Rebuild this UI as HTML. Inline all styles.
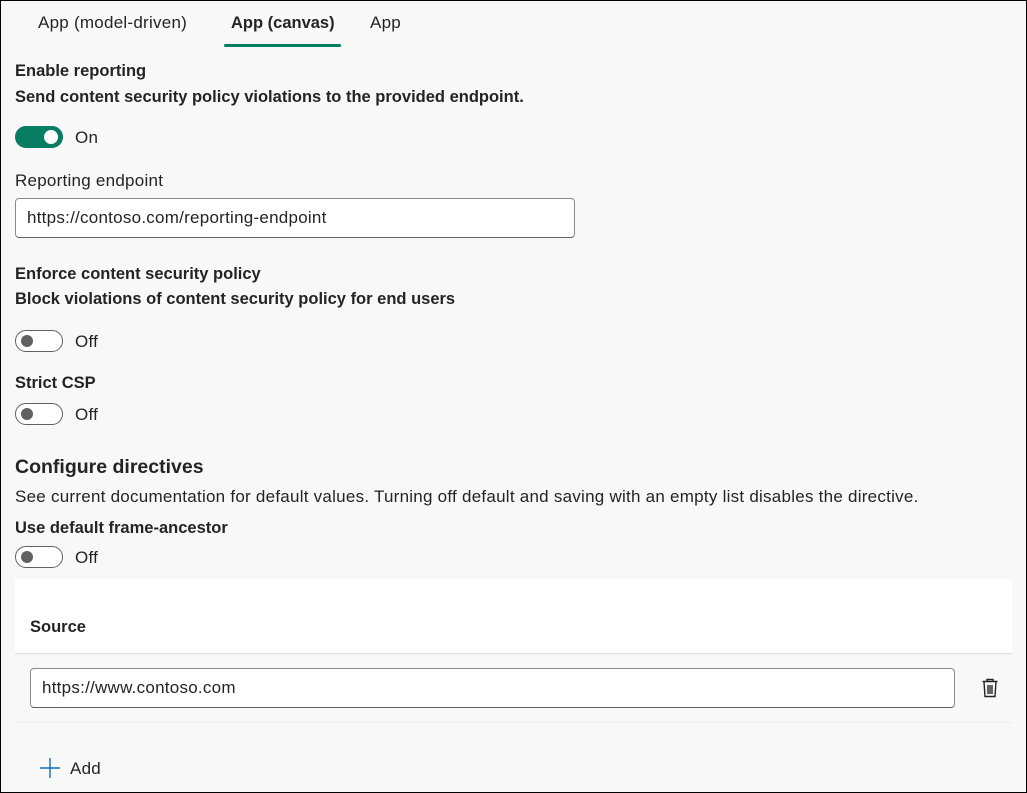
<!DOCTYPE html>
<html><head><style>
body{margin:0;width:1027px;height:793px;overflow:hidden;font-family:"Liberation Sans",sans-serif;color:#242424;}
#f{position:absolute;left:0;top:0;width:1025px;height:791px;border:1px solid #000;background:#f8f8f8;}
.a{position:absolute;white-space:nowrap;font-size:17px;letter-spacing:0.25px;left:14px;}
.b{font-weight:bold;font-size:16.5px;letter-spacing:0;}
.tg{position:absolute;width:48px;height:22px;border-radius:12px;box-sizing:border-box;border:1px solid #616161;background:#fff;}
.tg::after{content:"";position:absolute;top:4px;left:5px;width:12px;height:12px;border-radius:50%;background:#616161;}
.tg.on{background:#077d63;border-color:#077d63;}
.tg.on::after{left:auto;right:4px;background:#fff;width:14px;height:14px;top:3px;}
.in{position:absolute;background:#fff;border:1px solid #8a8a8a;border-bottom-color:#616161;border-radius:4px;box-sizing:border-box;font-size:17px;letter-spacing:0.25px;padding-left:11px;}
</style></head><body><div id="f">
<div class="a" style="left:37px;top:12px">App (model-driven)</div>
<div class="a b" style="left:230px;top:13px">App (canvas)</div>
<div style="position:absolute;left:223px;top:43px;width:117px;height:3px;background:#077d63;border-radius:2px"></div>
<div class="a" style="left:369px;top:12px">App</div>
<div class="a b" style="top:61px">Enable reporting</div>
<div class="a b" style="top:87px">Send content security policy violations to the provided endpoint.</div>
<div class="tg on" style="left:14px;top:125px"></div><div class="a" style="left:74px;top:127px">On</div>
<div class="a" style="top:170px">Reporting endpoint</div>
<div class="in" style="left:14px;top:197px;width:560px;height:40px;line-height:38px">https://contoso.com/reporting-endpoint</div>
<div class="a b" style="top:264px">Enforce content security policy</div>
<div class="a b" style="top:289px">Block violations of content security policy for end users</div>
<div class="tg" style="left:14px;top:329px"></div><div class="a" style="left:74px;top:331px">Off</div>
<div class="a b" style="top:373px">Strict CSP</div>
<div class="tg" style="left:14px;top:402px"></div><div class="a" style="left:74px;top:404px">Off</div>
<div class="a b" style="top:455px;font-size:19.5px">Configure directives</div>
<div class="a" style="top:486px">See current documentation for default values. Turning off default and saving with an empty list disables the directive.</div>
<div class="a b" style="top:518px">Use default frame-ancestor</div>
<div class="tg" style="left:14px;top:545px"></div><div class="a" style="left:74px;top:547px">Off</div>
<div style="position:absolute;left:14px;top:578px;width:997px;height:74px;background:#fff;border-bottom:1px solid #e0e0e0"></div>
<div class="a b" style="left:29px;top:617px">Source</div>
<div style="position:absolute;left:14px;top:653px;width:997px;height:68px;border-bottom:1px solid #eee"></div>
<div class="in" style="left:29px;top:667px;width:925px;height:40px;line-height:38px">https://www.contoso.com</div>
<svg style="position:absolute;left:980px;top:677px" width="18" height="20" viewBox="0 0 18 20" fill="none" stroke="#242424" stroke-width="1.4"><path d="M6 3V1.5h6V3M1.5 3.5h15M3 3.5l1 15h10l1-15M7 7v9M9 7v9M11 7v9"/></svg>
<svg style="position:absolute;left:38px;top:756px" width="22" height="22" viewBox="0 0 22 22" stroke="#0f6cbd" stroke-width="1.4"><path d="M11 1v20M1 11h20"/></svg>
<div class="a" style="left:69px;top:758px">Add</div>
</div></body></html>
